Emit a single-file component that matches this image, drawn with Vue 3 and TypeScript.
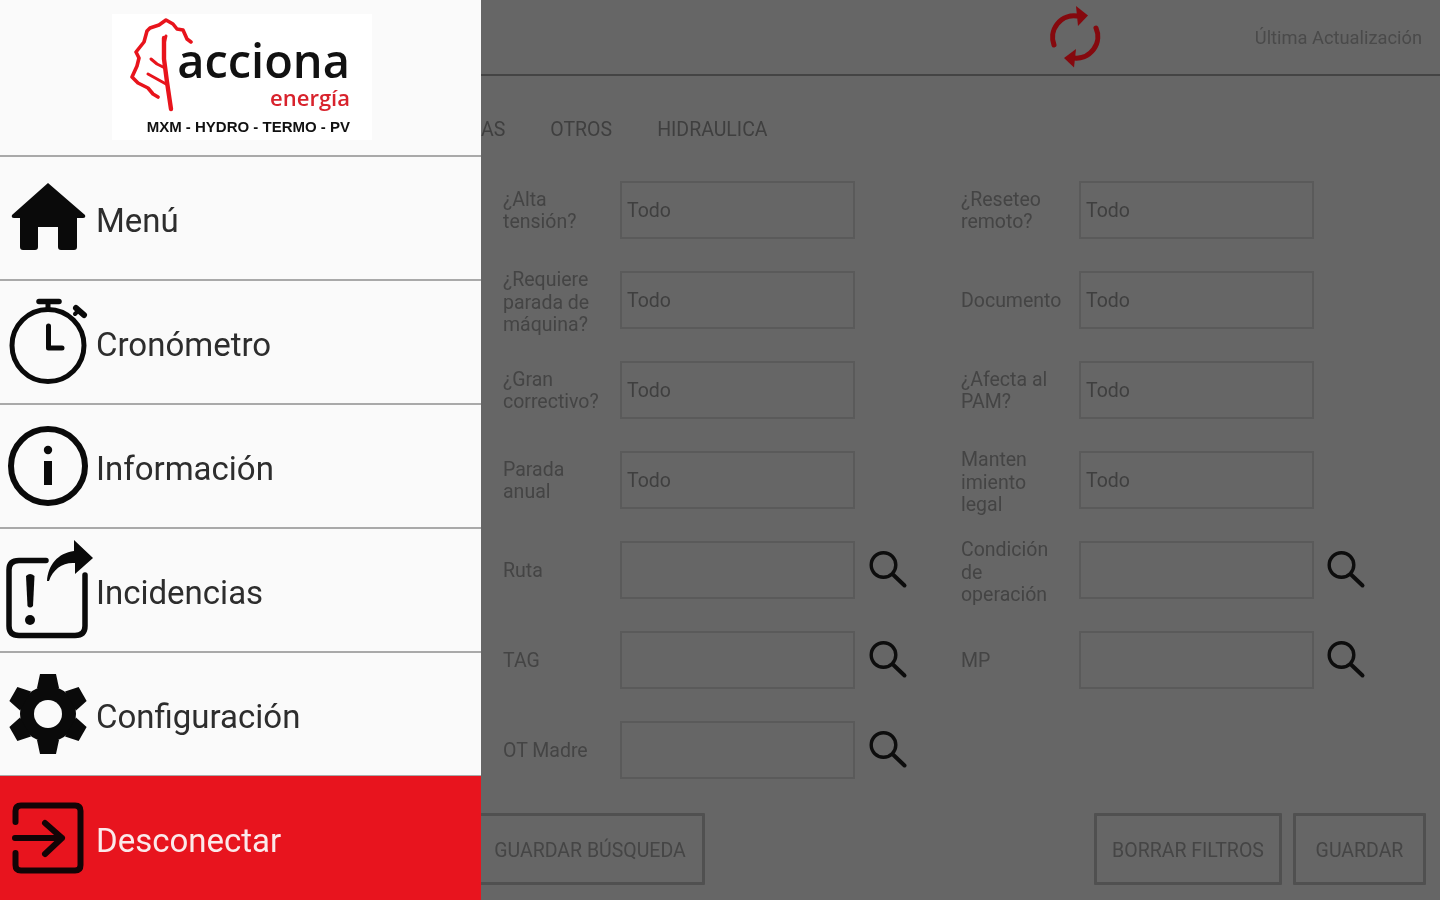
<script setup lang="ts">
interface Field {
  label: string
  value?: string
  search?: boolean
}

const fields: Field[] = [
  { label: '¿Alta\ntensión?', value: 'Todo' },
  { label: '¿Reseteo\nremoto?', value: 'Todo' },
  { label: '¿Requiere\nparada de\nmáquina?', value: 'Todo' },
  { label: 'Documento', value: 'Todo' },
  { label: '¿Gran\ncorrectivo?', value: 'Todo' },
  { label: '¿Afecta al\nPAM?', value: 'Todo' },
  { label: 'Parada\nanual', value: 'Todo' },
  { label: 'Manten\nimiento\nlegal', value: 'Todo' },
  { label: 'Ruta', search: true },
  { label: 'Condición\nde\noperación', search: true },
  { label: 'TAG', search: true },
  { label: 'MP', search: true },
  { label: 'OT Madre', search: true }
]

const gearTeeth = [0, 60, 120, 180, 240, 300]

const isTall = (label: string) => label.split('\n').length > 2
</script>

<template>
  <div class="screen">
    <aside class="drawer">
      <div class="drawer-head">
        <div class="logo">
          <div class="logo-top">
            <svg class="leaf" viewBox="128 16 64 96" fill="none" stroke="#e8141c" stroke-linecap="round" stroke-linejoin="round">
              <path stroke-width="3.6" d="M190 40 L186 37 L182 28 L176 27 L172 22 L165 18 L158 23 L149 26 L146 29 L143 40 L135 50 L138 56 L136 64 L131 75 L137 81 L147 86 L152 92 L157 95" />
              <path stroke-width="4.4" d="M163 36 V57 L166 80 L170 107" />
              <path stroke-width="3" d="M150 57 L156 62 L164 66 M147 72 L156 77 L165 82 M163 42 L165 34" />
            </svg>
            <div class="logo-words">
              <span class="logo-name">acciona</span>
              <span class="logo-sub">energía</span>
            </div>
          </div>
          <div class="logo-tag">MXM - HYDRO - TERMO - PV</div>
        </div>
      </div>

      <div class="nav-row">
        <svg class="nav-icon" viewBox="8 178 80 80">
          <path fill="#0a0a0a" d="M48 183 L85 215 Q86 218 83 218 H77 V247 Q77 250 74 250 H61 Q58 250 58 247 V227 H38 V247 Q38 250 35 250 H23 Q20 250 20 247 V218 H14 Q11 218 12 215 Z" />
        </svg>
        <span>Menú</span>
      </div>

      <div class="nav-row">
        <svg class="nav-icon" viewBox="8 302 80 80" fill="none" stroke="#0a0a0a" stroke-width="5" stroke-linecap="round" stroke-linejoin="round">
          <circle cx="48" cy="345.500" r="36" />
          <path stroke-width="5.500" d="M39 301.500 H59" />
          <path d="M48 302 V309" />
          <path stroke-width="6" d="M76 308 L84 315" />
          <path stroke-width="4" d="M75 314 L78 311" />
          <path d="M48.500 326 V348 H62" />
        </svg>
        <span>Cronómetro</span>
      </div>

      <div class="nav-row">
        <svg class="nav-icon" viewBox="8 426 80 80">
          <circle cx="48" cy="466" r="37" fill="none" stroke="#0a0a0a" stroke-width="6" />
          <circle cx="48" cy="450" r="4.200" fill="#0a0a0a" />
          <rect x="44" y="461" width="8" height="24" fill="#0a0a0a" />
        </svg>
        <span>Información</span>
      </div>

      <div class="nav-row">
        <svg class="nav-icon" viewBox="8 550 80 80">
          <path fill="none" stroke="#0a0a0a" stroke-width="5.500" stroke-linecap="round" d="M46 560.500 H19 Q9 560.500 9 570 V626 Q9 635.500 19 635.500 H75 Q85 635.500 85 626 V575" />
          <path fill="#0a0a0a" d="M26 576 Q30 572 34.500 576 L33 606 Q30 609 27.500 606 Z" />
          <circle cx="30" cy="620" r="5" fill="#0a0a0a" />
          <path fill="#0a0a0a" d="M47 581 C48 565 58 553 74 551 L74 540 L93 558 L75 574 L75 563 C63 562 53 569 49 581 Z" />
        </svg>
        <span>Incidencias</span>
      </div>

      <div class="nav-row">
        <svg class="nav-icon" viewBox="8 674 80 80">
          <g transform="translate(48 714)">
            <circle r="28" fill="#0a0a0a" />
            <polygon
              v-for="angle in gearTeeth"
              :key="angle"
              :transform="`rotate(${angle})`"
              points="-11,-26 11,-26 8,-40 -8,-40"
              fill="#0a0a0a"
            />
            <circle r="14" fill="#fafafa" />
          </g>
        </svg>
        <span>Configuración</span>
      </div>

      <div class="nav-row nav-exit">
        <svg class="nav-icon" viewBox="8 798 80 80" fill="none" stroke="#120406" stroke-width="6" stroke-linecap="round" stroke-linejoin="round">
          <path d="M15.500 822 V811 Q15.500 805.500 21 805.500 H75 Q80.500 805.500 80.500 811 V865 Q80.500 870.500 75 870.500 H21 Q15.500 870.500 15.500 865 V853" />
          <path d="M15 838 H62 M45 823 L62 838 L45 854" />
        </svg>
        <span>Desconectar</span>
      </div>
    </aside>

    <main class="main">
      <header class="topbar">
        <svg class="refresh" viewBox="1046 4 56 68" fill="none" stroke="#85090e" stroke-width="5" stroke-linecap="round">
          <path d="M1053 46 A21.500 21.500 0 0 1 1076 17" />
          <path fill="#85090e" stroke="none" d="M1075 7 L1087 16.500 L1077 27 Z" />
          <path d="M1095 29 A21.500 21.500 0 0 1 1073 59" />
          <path fill="#85090e" stroke="none" d="M1075 50 L1063 59 L1073 68.500 Z" />
        </svg>
        <span class="updated">Última Actualización</span>
      </header>

      <nav class="tabs">
        <span>AS</span>
        <span>OTROS</span>
        <span>HIDRAULICA</span>
      </nav>

      <section class="form">
        <div v-for="field in fields" :key="field.label" class="field">
          <label class="field-label" :class="{ 'field-label-tall': isTall(field.label) }">{{ field.label }}</label>
          <div class="field-box">{{ field.value }}</div>
          <svg v-if="field.search" class="search" viewBox="868 550 40 40" fill="none" stroke="#0d0d0d" stroke-linecap="round">
            <circle cx="883.500" cy="565" r="12.300" stroke-width="3.400" />
            <path stroke-width="4" d="M893.500 575 L904.500 585.500" />
          </svg>
        </div>
      </section>

      <footer class="actions">
        <button class="btn btn-save-search">GUARDAR BÚSQUEDA</button>
        <div class="actions-right">
          <button class="btn btn-clear">BORRAR FILTROS</button>
          <button class="btn btn-save">GUARDAR</button>
        </div>
      </footer>
    </main>
  </div>
</template>

<style>
html,
body {
  margin: 0;
  background: #666;
  overflow: hidden;
}
</style>

<style scoped>
.screen {
  display: flex;
  width: 1440px;
  height: 900px;
  overflow: hidden;
  font-family: Roboto, "Liberation Sans", sans-serif;
  filter: blur(0.45px);
}

/* drawer */
.drawer {
  display: flex;
  flex-direction: column;
  flex: 0 0 481px;
  background: #fafafa;
}

.drawer-head {
  box-sizing: border-box;
  height: 157px;
  padding-top: 14px;
  padding-left: 112px;
  border-bottom: 2px solid #a9a9a9;
}

.logo {
  box-sizing: border-box;
  display: flex;
  flex-direction: column;
  width: 260px;
  height: 126px;
  padding: 4px 22px 0 18px;
  background: #fff;
}

.logo-top {
  display: flex;
  justify-content: flex-end;
  height: 96px;
}

.leaf {
  flex: none;
  width: 64px;
  height: 96px;
  margin-right: -16px;
  margin-left: -2px;
}

.logo-words {
  display: flex;
  flex-direction: column;
  align-items: flex-end;
}

.logo-name {
  margin-top: 15px;
  font-family: "Open Sans", sans-serif;
  font-size: 47px;
  font-weight: 600;
  line-height: 54px;
  color: #111;
}

.logo-sub {
  font-family: "Open Sans", sans-serif;
  font-size: 22px;
  font-weight: 600;
  line-height: 20px;
  color: #d8222c;
}

.logo-tag {
  margin-top: 4px;
  font-family: "Liberation Sans", sans-serif;
  font-size: 15px;
  font-weight: 700;
  line-height: 18px;
  text-align: right;
  white-space: nowrap;
  color: #111;
}

.nav-row {
  box-sizing: border-box;
  display: flex;
  align-items: center;
  height: 124px;
  padding-left: 8px;
  font-size: 33px;
  color: #2d2d2d;
  border-bottom: 2px solid #a9a9a9;
}

.nav-row span {
  margin-top: 4px;
}

.nav-icon {
  flex: none;
  width: 80px;
  height: 80px;
  margin-right: 8px;
  overflow: visible;
}

.nav-exit {
  flex: 1;
  margin-top: -1px;
  color: #fbe9ea;
  background: #e8141e;
  border-bottom: 0;
}

/* page behind the drawer */
.main {
  flex: 1;
  min-width: 0;
  overflow: hidden;
  background: #666;
  color: #3f3f3f;
  font-size: 19.5px;
}

.topbar {
  box-sizing: border-box;
  display: flex;
  align-items: center;
  justify-content: flex-end;
  height: 76px;
  padding-right: 18px;
  border-bottom: 2px solid #444;
}

.refresh {
  flex: none;
  width: 56px;
  height: 68px;
  margin-right: 152px;
}

.updated {
  font-size: 18.3px;
  color: #4a4a4a;
  white-space: nowrap;
}

.tabs {
  display: flex;
  align-items: center;
  gap: 45px;
  height: 105px;
  padding-top: 2px;
  box-sizing: border-box;
  padding-left: 1px;
  margin-left: -1px;
}

.form {
  display: grid;
  grid-template-columns: 458px 458px;
  grid-auto-rows: 58px;
  row-gap: 32px;
  padding-left: 22px;
}

.field {
  display: flex;
  align-items: center;
}

.field-label {
  flex: none;
  width: 117px;
  padding-top: 2px;
  line-height: 22.5px;
  white-space: pre-line;
  color: #444;
}

.field:nth-child(even) .field-label {
  width: 118px;
}

.field:nth-child(even) .search {
  margin-left: 12px;
}

.field-label-tall {
  padding-top: 6px;
}

.field-box {
  box-sizing: border-box;
  display: flex;
  align-items: center;
  flex: none;
  width: 235px;
  height: 58px;
  padding-left: 5px;
  border: 2px solid #5a5a5a;
}

.search {
  flex: none;
  width: 40px;
  height: 40px;
  margin-left: 13px;
}

.actions {
  display: flex;
  align-items: flex-start;
  justify-content: space-between;
  margin-top: 34px;
  margin-left: -6px;
  padding-right: 14px;
}

.actions-right {
  display: flex;
  gap: 11px;
}

.btn {
  box-sizing: border-box;
  height: 72px;
  padding: 2px 0 0;
  font: inherit;
  color: #454545;
  background: transparent;
  border: 3px solid #505050;
  border-radius: 1px;
}

.btn-save-search {
  width: 230px;
}

.btn-clear {
  width: 188px;
}

.btn-save {
  width: 133px;
}
</style>
